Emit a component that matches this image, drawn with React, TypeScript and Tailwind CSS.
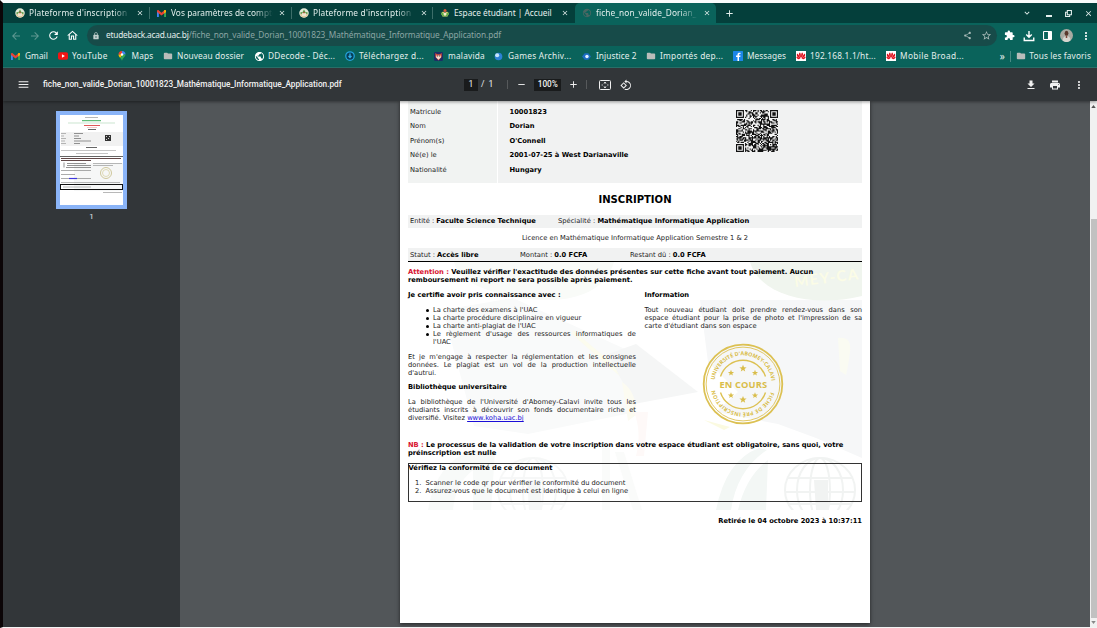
import React from "react";
import {
  MdAdd,
  MdArrowBack,
  MdArrowForward,
  MdClose,
  MdExtension,
  MdFolder,
  MdFileDownload,
  MdLock,
  MdMenu,
  MdMoreVert,
  MdOutlineHome,
  MdOutlineRotate90DegreesCcw,
  MdPrint,
  MdPublic,
  MdRefresh,
  MdRemove,
  MdShare,
  MdStarBorder,
  MdKeyboardArrowDown,
} from "react-icons/md";

/* ---------- small icons ---------- */

const Crest = () => (
  <svg viewBox="0 0 20 20" className="size-[10px]">
    <circle cx="10" cy="10" r="9.5" fill="#e4ebda" />
    <path d="M2 11a8 8 0 0 0 16 0z" fill="#dfc9a0" />
    <path d="M10 3l4 7H6z" fill="#5d9c4c" />
    <path d="M3 8h3v4H3zM14 8h3v4h-3z" fill="#6fa75b" />
    <circle cx="10" cy="9" r="1.6" fill="#c4453a" />
    <path d="M6 13h8v2H6z" fill="#fff" />
  </svg>
);

const Fruit = () => (
  <svg viewBox="0 0 20 20" className="size-[10px]">
    <path d="M2 11l4-4 4 3 4-3 4 4-3 6H5z" fill="#e3d27a" />
    <path d="M1 9l6 1 3 7-5-1zM19 9l-6 1-3 7 5-1z" fill="#5cae46" />
    <circle cx="10" cy="5" r="3" fill="#d8583c" />
    <circle cx="10" cy="12" r="3" fill="#f5eecb" />
  </svg>
);

const Gmail = () => (
  <svg viewBox="0 0 24 18" className="h-[7px] w-[9px]">
    <path d="M0 18V3l5 4v11z" fill="#4285f4" />
    <path d="M24 18V3l-5 4v11z" fill="#34a853" />
    <path d="M0 3c0-3 3-4 5-2l7 6 7-6c2-2 5-1 5 2v2l-5 4-7 5-7-5-5-4z" fill="#ea4335" />
    <path d="M19 1c2-2 5-1 5 2v2l-5 4z" fill="#fbbc04" />
  </svg>
);

const YouTube = () => (
  <svg viewBox="0 0 24 18" className="h-[8px] w-[10px]">
    <rect width="24" height="18" rx="4" fill="#f01414" />
    <path d="M9.500 5v8l7-4z" fill="#fff" />
  </svg>
);

const Pin = () => (
  <svg viewBox="0 0 16 20" className="h-[10px] w-[8px]">
    <path d="M8 0a7 7 0 0 1 7 7H8z" fill="#4285f4" />
    <path d="M8 0a7 7 0 0 0-7 7h7z" fill="#ea4335" />
    <path d="M1 7c0 3 2 5 3.500 7L9 7z" fill="#fbbc04" />
    <path d="M15 7c0 5-6 7-7 13-.5-3-2-4-3.500-6L10 7z" fill="#34a853" />
    <circle cx="8" cy="7" r="2.500" fill="#fff" />
  </svg>
);

const Power = () => (
  <svg viewBox="0 0 20 20" className="size-[10px]">
    <circle cx="10" cy="10" r="8.500" fill="#063e58" stroke="#24a3dc" strokeWidth="2.500" />
    <path d="M10 5v7m-3-2 3 3 3-3" fill="none" stroke="#35b3ea" strokeWidth="2.500" />
  </svg>
);

const Malavida = () => (
  <svg viewBox="0 0 20 20" className="size-[9px]">
    <rect width="20" height="20" rx="3" fill="#1d2f66" />
    <path d="M3 2l4 3h6l4-3v9l-7 8-7-8z" fill="#e0503a" />
    <path d="M5 8h10v4l-5 5-5-5z" fill="#f4dfd0" />
    <path d="M7 8h2v2H7zM11 8h2v2h-2z" fill="#2d3242" />
  </svg>
);

const Ball = () => (
  <svg viewBox="0 0 20 20" className="size-[9px]">
    <circle cx="10" cy="10" r="8.500" fill="#2c82d6" />
    <circle cx="7" cy="7" r="4.500" fill="#c5e5fb" />
  </svg>
);

const Eye = () => (
  <svg viewBox="0 0 20 20" className="size-[9px]">
    <path d="M0 10l6-7h8l6 7-6 7H6z" fill="#1c6cc4" />
    <circle cx="11" cy="10" r="3.800" fill="#e1f3ff" />
  </svg>
);

const Facebook = () => (
  <svg viewBox="0 0 20 20" className="size-[10px]">
    <rect width="20" height="20" rx="1" fill="#1b86e8" />
    <path d="M9 20v-8H6V9h3V7c0-3 2-4 6-3.500V6c-2-.2-3 0-3 1.500V9h3l-.5 3H12v8z" fill="#fff" />
  </svg>
);

const Huawei = () => (
  <svg viewBox="0 0 20 20" className="size-[10px]">
    <rect width="20" height="20" fill="#fff" />
    <path d="M9.700 14C5 9 5 4 8 3c2 2 2 6 1.700 11zM10.300 14C15 9 15 4 12 3c-2 2-2 6-1.700 11z" fill="#e0101c" />
    <path d="M9 15C3 13 0 9 2.500 5c3 2 5 6 6.500 10zM11 15c6-2 9-6 6.500-10-3 2-5 6-6.500 10z" fill="#e0101c" />
    <path d="M8.500 15.500c-4 2-7 0-8-4 3 0 6 2 8 4zM11.500 15.500c4 2 7 0 8-4-3 0-6 2-8 4z" fill="#e0101c" />
  </svg>
);

const Folder = () => <MdFolder className="size-[10px] text-[#b9bdba]" />;

/* ---------- browser chrome ---------- */

type TabProps = {
  icon: React.ReactNode;
  label: string;
  width: string;
  tracking: string;
  active?: boolean;
  line?: boolean;
};

function Tab({ icon, label, width, tracking, active, line }: TabProps) {
  return (
    <div
      className={`${width} flex h-full shrink-0 items-center pl-[7px] ${
        active ? "rounded-t-[5px] bg-[#0a635b]" : ""
      }`}
    >
      <span className="flex w-[14px] shrink-0 items-center">{icon}</span>
      <span
        className={`${tracking} w-[102px] shrink-0 overflow-hidden whitespace-nowrap ${
          line || active ? "[mask-image:linear-gradient(to_right,black_82%,transparent_100%)]" : ""
        }`}
      >
        {label}
      </span>
      <MdClose className="ml-[5px] size-[8px] shrink-0" />
      {line && <span className="ml-auto h-[12px] w-px bg-[#3c6e69]" />}
    </div>
  );
}

const bookmarks = [
  { icon: <Gmail />, label: "Gmail", width: "w-[47px] tracking-[0.05px]" },
  { icon: <YouTube />, label: "YouTube", width: "w-[59.500px] tracking-[0.300px]" },
  { icon: <Pin />, label: "Maps", width: "w-[45.500px] tracking-[0.150px]" },
  { icon: <Folder />, label: "Nouveau dossier", width: "w-[91px] tracking-[0.100px]" },
  { icon: <MdPublic className="size-[11px] text-white" />, label: "DDecode - Déc...", width: "w-[91px] tracking-[0.200px]" },
  { icon: <Power />, label: "Téléchargez d...", width: "w-[89px] tracking-[0.300px]" },
  { icon: <Malavida />, label: "malavida", width: "w-[60px] tracking-[0.200px]" },
  { icon: <Ball />, label: "Games Archiv...", width: "w-[88px] tracking-[0.250px]" },
  { icon: <Eye />, label: "Injustice 2", width: "w-[64px] tracking-[0.050px]" },
  { icon: <Folder />, label: "Importés dep...", width: "w-[87px] tracking-[0.250px]" },
  { icon: <Facebook />, label: "Messages", width: "w-[63px] tracking-[0.050px]" },
  { icon: <Huawei />, label: "192.168.1.1/ht...", width: "w-[90px] tracking-[0.200px]" },
  { icon: <Huawei />, label: "Mobile Broad...", width: "w-[90px] tracking-[0.350px]" },
];

function Chrome() {
  return (
    <header className="shrink-0 font-['Noto_Sans','Open_Sans',sans-serif] text-[8.300px] text-[#e4efed]">
      <div className="flex h-[20px] items-center bg-[#043f3b] pl-[5px]">
        <Tab icon={<Crest />} label="Plateforme d'inscription" width="w-[142px]" tracking="tracking-[0.200px]" line />
        <Tab icon={<Gmail />} label="Vos paramètres de compte" width="w-[142px]" tracking="tracking-[0.050px]" line />
        <Tab icon={<Crest />} label="Plateforme d'inscription" width="w-[141px]" tracking="tracking-[0.200px]" line />
        <Tab icon={<Fruit />} label="Espace étudiant | Accueil" width="w-[142px]" tracking="tracking-[-0.020px]" />
        <Tab
          icon={<MdPublic className="size-[10px] text-[#486763]" />}
          label="fiche_non_valide_Dorian_10001823"
          width="w-[141px]"
          tracking="tracking-[0.100px]"
          active
        />
        <MdAdd className="ml-[8px] size-[11px]" />
        <div className="ml-auto flex items-center pr-[4px]">
          <MdKeyboardArrowDown className="mr-[14px] size-[10px]" />
          <span className="mr-[13px] mt-[6px] h-[1.500px] w-[6px] bg-[#e4efed]" />
          <svg viewBox="0 0 12 12" className="mr-[12px] size-[7px]" fill="none" stroke="currentColor" strokeWidth="1.800">
            <path d="M4 1h7v7H4zM4 4H1v7h7V8" />
          </svg>
          <MdClose className="size-[9px]" />
        </div>
      </div>

      <div className="flex h-[25px] items-center bg-[#0a635b] pl-[7px]">
        <MdArrowBack className="size-[12px] text-[#5f9892]" />
        <MdArrowForward className="ml-[7px] size-[12px] text-[#5f9892]" />
        <MdRefresh className="ml-[6px] size-[13px] text-white" />
        <MdOutlineHome className="ml-[6px] size-[13px] text-white" />
        <div className="ml-[8px] flex h-[21px] w-[910px] items-center rounded-full bg-[#174b49] pl-[5px] pr-[5px]">
          <MdLock className="size-[8px] text-[#c2d0ce]" />
          <span className="ml-[6px] whitespace-nowrap tracking-[-0.080px] text-[#8ba6a4]">
            <span className="tracking-[-0.200px] text-[#e4efed]">etudeback.acad.uac.bj</span>
            /fiche_non_valide_Dorian_10001823_Mathématique_Informatique_Application.pdf
          </span>
          <MdShare className="ml-auto size-[9px] text-[#a9bbb9]" />
          <MdStarBorder className="ml-[9px] size-[11px] text-[#a9bbb9]" />
        </div>
        <MdExtension className="ml-[7px] size-[11px] text-white" />
        <svg viewBox="0 0 24 24" className="ml-[8px] size-[12px]" fill="none" stroke="#fff" strokeWidth="2.800">
          <path d="M12 2v12M6.500 9l5.500 5.500L17.500 9M2.500 15v6h19v-6" />
        </svg>
        <svg viewBox="0 0 20 20" className="ml-[8px] size-[9px]">
          <rect x="1.200" y="1.200" width="17.600" height="17.600" rx="1" fill="none" stroke="#fff" strokeWidth="2.400" />
          <rect x="11" y="1" width="8" height="18" fill="#fff" />
        </svg>
        <svg viewBox="0 0 26 26" className="ml-[8px] size-[13px]">
          <circle cx="13" cy="13" r="13" fill="#a9aaa2" />
          <path d="M5 23c1-6 3-9 8-9s8 3 8 9a13 13 0 0 1-16 0z" fill="#d8d5cf" />
          <ellipse cx="13" cy="8.500" rx="3.800" ry="5" fill="#5a382c" />
          <path d="M11.500 13h3v5h-3z" fill="#804b3d" />
        </svg>
        <MdMoreVert className="ml-[7px] size-[12px] text-white" />
      </div>

      <div className="flex h-[20px] items-center border-b border-[#2b7770] bg-[#0a635b] pb-[3px] pl-[8px]">
        {bookmarks.map((b) => (
          <div key={b.label} className={`${b.width} flex shrink-0 items-center whitespace-nowrap`}>
            <span className="flex w-[14px] shrink-0 items-center">{b.icon}</span>
            {b.label}
          </div>
        ))}
        <span className="ml-auto text-[10px] leading-none">»</span>
        <span className="ml-[5px] mr-[5px] h-[11px] w-px bg-[#4a8b85]" />
        <span className="flex w-[13.500px] shrink-0 items-center"><Folder /></span>
        <span className="mr-[6px] whitespace-nowrap tracking-[0.130px]">Tous les favoris</span>
      </div>
    </header>
  );
}

function PdfToolbar() {
  return (
    <div className="z-10 flex h-[33px] shrink-0 items-center bg-[#323639] font-[Roboto,sans-serif] text-[8.500px] text-[#f1f1f1] shadow-[0_1px_3px_rgba(0,0,0,0.4)]">
      <div className="flex w-[461px] items-center pl-[14px]">
        <MdMenu className="size-[13px]" />
        <span className="ml-[13px] whitespace-nowrap text-[8.250px] font-medium">
          fiche_non_valide_Dorian_10001823_Mathématique_Informatique_Application.pdf
        </span>
      </div>
      <span className="flex h-[12px] w-[14px] items-center justify-center bg-[#191b1c]">1</span>
      <span className="ml-[3px]">/</span>
      <span className="ml-[4px]">1</span>
      <span className="ml-[14px] h-[9px] w-px bg-[#56595b]" />
      <MdRemove className="ml-[8px] size-[11px]" />
      <span className="ml-[7px] flex h-[12px] w-[27px] items-center justify-center bg-[#191b1c] text-[8.200px] font-medium">
        100%
      </span>
      <MdAdd className="ml-[7px] size-[11px]" />
      <span className="ml-[7px] h-[9px] w-px bg-[#56595b]" />
      <svg viewBox="0 0 24 20" className="ml-[12px] h-[10px] w-[12px]" fill="none" stroke="currentColor" strokeWidth="2">
        <rect x="1" y="1" width="22" height="18" rx="2" />
        <path d="M12 4v4M12 12v4M9.500 6.500 12 4l2.500 2.500M9.500 13.500 12 16l2.500-2.500M5 10h3M16 10h3" strokeWidth="1.500" />
      </svg>
      <MdOutlineRotate90DegreesCcw className="ml-[9px] size-[12px]" />
      <div className="ml-auto flex items-center pr-[12px]">
        <MdFileDownload className="size-[12px]" />
        <MdPrint className="ml-[12px] size-[12px]" />
        <MdMoreVert className="ml-[12px] size-[12px]" />
      </div>
    </div>
  );
}

/* ---------- document drawings ---------- */

const QR_SIZE = 37;

function qrPath() {
  let seed = 1823;
  const finder = (x: number, y: number) => {
    const ring = Math.max(Math.abs(x - 3), Math.abs(y - 3));
    return ring === 3 || ring <= 1;
  };
  let d = "";
  for (let y = 0; y < QR_SIZE; y++) {
    for (let x = 0; x < QR_SIZE; x++) {
      seed = (seed * 1103515245 + 12345) % 2147483648;
      let on = (seed >> 12) % 100 < 53;
      const far = QR_SIZE - 8;
      if (x < 8 && y < 8) on = x < 7 && y < 7 && finder(x, y);
      else if (x >= far && y < 8) on = x > far && y < 7 && finder(x - far - 1, y);
      else if (x < 8 && y >= far) on = x < 7 && y > far && finder(x, y - far - 1);
      else if (Math.abs(x - 30) < 3 && Math.abs(y - 30) < 3)
        on = Math.max(Math.abs(x - 30), Math.abs(y - 30)) !== 1;
      if (on) d += `M${x} ${y}h1v1h-1z`;
    }
  }
  return d;
}

const QR = () => (
  <svg viewBox="0 0 37 37" className="size-[42px]">
    <rect width="37" height="37" fill="#f4f4f4" />
    <path d={qrPath()} fill="#111" />
  </svg>
);

const STAR = "M0-3.700 1-1.200 3.600-1.100 1.500.5 2.200 3 0 1.600-2.200 3-1.500.5-3.600-1.100-1-1.200z";

const Stamp = () => (
  <svg viewBox="-41 -41 82 82" className="size-[82px]" fill="none" stroke="#dcc153">
    <circle r="39.300" strokeWidth="1.800" />
    <circle r="36.900" strokeWidth="0.900" />
    <path d="M-22.500-7.500a23.700 23.700 0 0 1 45 0M-22.500 8.500a23.700 23.700 0 0 0 45 0" strokeWidth="1.400" />
    <path id="arcTop" d="M-28.700 0a28.700 28.700 0 0 1 57.400 0" stroke="none" />
    <path id="arcBottom" d="M28.700 0a28.700 28.700 0 0 1-57.400 0" stroke="none" />
    <g fill="#d9bd4a" stroke="none" className="font-['Open_Sans','Noto_Sans',sans-serif] font-bold">
      <text fontSize="5.400" xmlSpace="preserve">
        <textPath href="#arcTop" startOffset="4" textLength="83">UNIVERSITÉ D'ABOMEY-CALAVI</textPath>
      </text>
      <text fontSize="5.400" xmlSpace="preserve">
        <textPath href="#arcBottom" startOffset="8" textLength="76">FICHE DE PRÉ INSCRIPTION</textPath>
      </text>
      <text x="-23.500" y="3.800" fontSize="9.300" textLength="47.500">EN COURS</text>
      <path d={STAR} transform="translate(0 -15.500)" />
      <path d={STAR} transform="translate(-12 -11) scale(.85)" />
      <path d={STAR} transform="translate(12 -11) scale(.85)" />
      <path d={STAR} transform="translate(0 15.700)" />
      <path d={STAR} transform="translate(-12 11.500) scale(.85)" />
      <path d={STAR} transform="translate(12 11.500) scale(.85)" />
    </g>
  </svg>
);

const Globe = ({ x }: { x: number }) => (
  <g transform={`translate(${x} 228)`} fill="none" stroke="#f1f3f2" strokeWidth="2">
    <ellipse rx="35" ry="32" />
    <ellipse rx="23" ry="32" />
    <ellipse rx="10" ry="32" />
    <path d="M-33-12h66M-35 2h70M-31 14h62" />
    <path d="M-6-10H8v30H-4z" fill="#f1f3f2" stroke="none" />
  </g>
);

const Watermark = () => (
  <svg viewBox="0 0 454 248" className="absolute left-[8px] top-[161px] -z-10 h-[248px] w-[454px]">
    <path d="M35 48 105 36 228 92V150L120 172 66 164z" fill="#f9fafa" />
    <path d="M46 0h160c-8 28-36 38-66 38S52 28 46 0z" fill="#f9fbf8" />
    <path d="M165 68 226 120 224 125 164 72z" fill="#fcfcee" />
    <path d="M292 38H454V196L408 176 370 162 308 150 330 130 300 100z" fill="#f6f7f8" />
    <path d="M200 92 228 82 290 130 226 142z" fill="#f5f6f6" />
    <path d="M342 0H454V34c-50 12-102 0-112-34z" fill="#f0f5ee" />
    <path d="M214 120q15 10 14 33l-8 6z" fill="#fcfbf1" />
    <path d="M226 150q8 20 2 44h8l4-44z" fill="#fef9f8" />
    <path d="M296 158 322 165 316 168z" fill="#fbfae0" />
    <path d="M430 76q14-2 12 14t-4 23l-6-4z" fill="#fafbf2" />
    <path d="M20 248q8-48 45-60l22 2-4 58H65v-40q-18 14-20 40z" fill="#f8faf9" />
    <path d="M308 248q10-50 43-62l8 2q-30 20-36 60zM330 248q8-34 30-50l-2 50z" fill="#f3f7f5" />
    <path d="M194 186h8v62h-8zM207 190h9l18 58h-9z" fill="#fafbfa" />
    <g opacity="0.6"><Globe x={125} /></g>
    <Globe x={412} />
    <text
      x="387"
      y="25"
      fill="#fbfce6"
      fontSize="15"
      fontWeight="700"
      textLength="64"
      transform="rotate(-7 387 25)"
      className="font-['Lato',sans-serif]"
    >
      MEY-CA
    </text>
  </svg>
);

/* ---------- document ---------- */

const Spread = ({ children }: { children: React.ReactNode }) => (
  <div className="whitespace-nowrap text-justify [text-align-last:justify]">{children}</div>
);

const Item = ({ children }: { children: React.ReactNode }) => (
  <li className="flex">
    <span className="mr-[4px] mt-[3px] size-[3px] shrink-0 rounded-full bg-black" />
    <div className="flex-1">{children}</div>
  </li>
);

const identity = [
  ["Matricule", "10001823"],
  ["Nom", "Dorian"],
  ["Prénom(s)", "O'Connell"],
  ["Né(e) le", "2001-07-25 à West Darianaville"],
  ["Nationalité", "Hungary"],
];

function Page() {
  return (
    <article className="relative isolate h-[522px] w-[470px] shrink-0 whitespace-nowrap bg-white px-[8px] font-['DejaVu_Sans',sans-serif] text-[6.720px] leading-[8px] text-[#1c1c1c] shadow-[0_1px_4px_rgba(0,0,0,0.6)]">
      <Watermark />
      <div className="flex h-[82px]">
        <div className="w-[89px] bg-[#f1f3f2] pl-[2px] pt-[3.500px]">
          {identity.map(([k]) => (
            <div key={k} className="h-[14.670px] leading-[14.670px]">{k}</div>
          ))}
        </div>
        <div className="ml-px flex flex-1 justify-between bg-[#f1f2f2] pl-[11.500px] pt-[3.500px]">
          <div className="font-bold text-black">
            {identity.map(([k, v]) => (
              <div key={k} className="h-[14.670px] leading-[14.670px]">{v}</div>
            ))}
          </div>
          <div className="mr-[84px] mt-[5.500px]"><QR /></div>
        </div>
      </div>
      <h1 className="h-[32px] text-center text-[10.050px] font-bold leading-[33px] text-black">INSCRIPTION</h1>
      <div className="flex h-[13px] bg-[#f1f2f2] pl-[2px] leading-[13.500px]">
        <span className="w-[148px]">Entité : <b className="text-black">Faculte Science Technique</b></span>
        <span>Spécialité : <b className="text-black">Mathématique Informatique Application</b></span>
      </div>
      <div className="h-[20px] text-center leading-[20px]">
        Licence en Mathématique Informatique Application Semestre 1 &amp; 2
      </div>
      <div className="flex h-[14px] border-b border-black bg-[#f1f2f2] pl-[2px] leading-[14px]">
        <span className="w-[110px]">Statut : <b className="text-black">Accès libre</b></span>
        <span className="w-[110px]">Montant : <b className="text-black">0.0 FCFA</b></span>
        <span>Restant dû : <b className="text-black">0.0 FCFA</b></span>
      </div>

      <p className="mt-[6px] font-bold text-black">
        <span className="text-[#d81431]">Attention :</span> Veuillez vérifier l'exactitude des données présentes sur cette
        fiche avant tout paiement. Aucun
        <br />
        remboursement ni report ne sera possible après paiement.
      </p>

      <div className="mt-[7px] flex h-[150px] justify-between">
        <div className="w-[228px]">
          <h2 className="font-bold text-black">Je certifie avoir pris connaissance avec :</h2>
          <ul className="mt-[7px] pl-[18px]">
            <Item>La charte des examens à l'UAC</Item>
            <Item>La charte procédure disciplinaire en vigueur</Item>
            <Item>La charte anti-plagiat de l'UAC</Item>
            <Item>
              <Spread>Le règlement d'usage des ressources informatiques de</Spread>
              l'UAC
            </Item>
          </ul>
          <div className="mt-[7px]">
            <Spread>Et je m'engage à respecter la réglementation et les consignes</Spread>
            <Spread>données. Le plagiat est un vol de la production intellectuelle</Spread>
            d'autrui.
          </div>
          <h2 className="mt-[6px] font-bold text-black">Bibliothèque universitaire</h2>
          <div className="mt-[7px]">
            <Spread>La bibliothèque de l'Université d'Abomey-Calavi invite tous les</Spread>
            <Spread>étudiants inscrits à découvrir son fonds documentaire riche et</Spread>
            diversifié. Visitez <a className="text-[#1a0dd8] underline">www.koha.uac.bj</a>
          </div>
        </div>
        <div className="w-[217.500px]">
          <h2 className="font-bold text-black">Information</h2>
          <div className="mt-[7px]">
            <Spread>Tout nouveau étudiant doit prendre rendez-vous dans son</Spread>
            <Spread>espace étudiant pour la prise de photo et l'impression de sa</Spread>
            carte d'étudiant dans son espace
          </div>
          <div className="ml-[57px] mt-[13px]"><Stamp /></div>
        </div>
      </div>

      <p className="font-bold text-black">
        <span className="text-[#d81431]">NB :</span> Le processus de la validation de votre inscription dans votre espace
        étudiant est obligatoire, sans quoi, votre
        <br />
        préinscription est nulle
      </p>

      <section className="mt-[6px] h-[39px] border border-[#333]">
        <h2 className="-ml-[0.500px] font-bold text-black">Vérifiez la conformité de ce document</h2>
        <ol className="mt-[7px] pl-[6px]">
          <li className="flex"><span className="w-[10.500px]">1.</span>Scanner le code qr pour vérifier le conformité du document</li>
          <li className="flex"><span className="w-[10.500px]">2.</span>Assurez-vous que le document est identique à celui en ligne</li>
        </ol>
      </section>
      <p className="mt-[15px] text-right font-bold text-black">Retirée le 04 octobre 2023 à 10:37:11</p>
    </article>
  );
}

/* ---------- sidebar ---------- */

const Thumbnail = () => (
  <svg viewBox="0 0 63 90" className="h-[90px] w-[63px] bg-white">
    <rect x="1" y="17" width="62" height="14" fill="#f1f1f1" />
    <path d="M14 48h49v28H14z" fill="#f6f7f7" />
    <g fill="none" strokeWidth="0.700">
      <path d="M25 2.500h13" stroke="#999" />
      <path d="M22 5.700h19" stroke="#3fae5c" strokeWidth="1" />
      <path d="M8 8h47" stroke="#b4dabb" />
      <path d="M24 10.500h16" stroke="#e05858" strokeWidth="1" />
      <path d="M27 12.500h10" stroke="#efb0b0" />
      <path d="M28 14.500h8M26 32.500h11" stroke="#666" strokeWidth="1" />
      <path d="M1 18.500h5M1 21h3M1 23.500h5M1 26h4M1 28.500h5" stroke="#999" />
      <path d="M14 18.500h9M14 21h5M14 23.500h7M14 26h17M14 28.500h6" stroke="#666" />
      <path d="M1 35.500h55M16 38.500h32" stroke="#aaa" />
      <path d="M0 41.500h63" stroke="#222" />
      <path d="M1 43.500h60M1 45.500h30" stroke="#624848" strokeWidth="1" />
      <path d="M4 47.500v5M7 48.500h19M7 50.500h24M6 52.500h25" stroke="#666" />
      <path d="M33 48.500h29M33 50.500h20" stroke="#999" />
      <path d="M1 55.500h30M1 59.500h14M1 63.500h30" stroke="#888" />
      <path d="M9 63.500h8" stroke="#3d36de" strokeWidth="1.200" />
      <path d="M1 67.500h59M3 72h28M43 77.500h19" stroke="#999" />
      <rect x="0.500" y="69.500" width="62" height="5" stroke="#111" strokeWidth="1" />
      <circle cx="46" cy="58" r="5.500" stroke="#bdb375" />
      <circle cx="46" cy="58" r="3.500" stroke="#d6cf9a" />
    </g>
    <path d="M45 20h6v6h-6z" fill="#333" />
    <path d="M46 21h1v1h-1zM49 21h1v1h-1zM46 24h1v1h-1zM48 23h1v1h-1z" fill="#ccc" />
  </svg>
);

export default function App() {
  return (
    <div className="flex h-[628px] w-[1097px] flex-col overflow-hidden border-b border-l-[3px] border-t-[3px] border-b-[#f4f4f4] border-l-[#0b0507] border-t-[#f8fbfb] bg-[#525659]">
      <Chrome />
      <PdfToolbar />
      <div className="flex min-h-0 flex-1">
        <aside className="flex w-[177px] shrink-0 flex-col items-center bg-[#323639] pt-[10px] font-[Roboto,sans-serif] text-[8px] text-[#e4e6e8]">
          <div className="border-4 border-[#8ab4f8]"><Thumbnail /></div>
          <span className="mt-[3px] leading-[10px]">1</span>
        </aside>
        <main className="flex flex-1 pl-[220px]"><Page /></main>
        <div className="flex w-[7px] shrink-0 flex-col items-center bg-[#f1f1f1]">
          <svg viewBox="0 0 6 4" className="mt-[4px] h-[3px] w-[5px]"><path d="M3 0 6 4H0z" fill="#555" /></svg>
          <div className="ml-px mt-[111px] h-[399px] w-[6px] bg-[#c1c1c1]" />
          <svg viewBox="0 0 6 4" className="mt-[3px] h-[3px] w-[5px]"><path d="M3 4 6 0H0z" fill="#888" /></svg>
        </div>
      </div>
    </div>
  );
}
